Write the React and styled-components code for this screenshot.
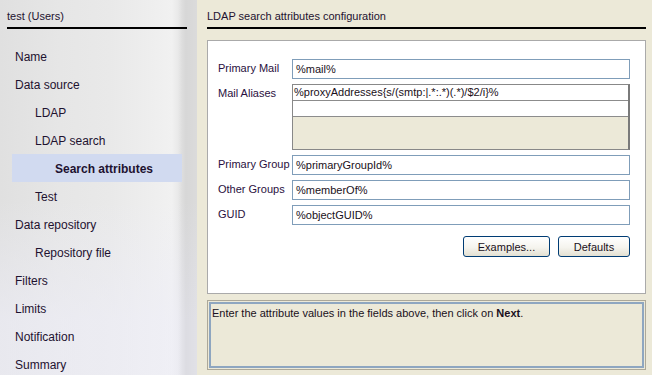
import styled, { createGlobalStyle } from "styled-components";

const GlobalStyle = createGlobalStyle`
  html, body {
    margin: 0;
    padding: 0;
    background: #ece9d8;
  }
`;

const Window = styled.div`
  display: flex;
  width: 652px;
  height: 375px;
  overflow: hidden;
  font-family: "Liberation Sans", Arial, sans-serif;
  color: #1e1230;
`;

const Sidebar = styled.div`
  width: 197px;
  flex-shrink: 0;
  box-sizing: border-box;
  padding: 0 10px 0 7px;
  background:
    linear-gradient(90deg, rgba(0,0,0,0) 0px, rgba(0,0,0,0) 178px, rgba(0,0,0,0.06) 186px, rgba(0,0,0,0.04) 197px),
    linear-gradient(180deg, rgba(255,255,255,0) 0px, rgba(255,255,255,0) 200px, rgba(238,238,248,0.6) 320px),
    linear-gradient(90deg, #e0e0e0 0px, #e6e6e6 60px, #e9e9e9 110px, #eeeeee 150px, #f1f1f1 172px, #e4e4e4 182px);
`;

const PaneHeader = styled.div`
  height: 29px;
  box-sizing: border-box;
  padding-top: 9px;
  font-size: 11px;
  line-height: 14px;
  border-bottom: 2px solid #000;
`;

const NavList = styled.ul`
  list-style: none;
  margin: 13px 0 0 5px;
  padding: 0;
  width: 170px;
`;

const NavItem = styled.li`
  height: 28px;
  line-height: 30px;
  padding-left: ${(p) => 3 + p.$level * 20}px;
  font-size: 12px;
  font-weight: ${(p) => (p.$active ? "bold" : "normal")};
  background: ${(p) => (p.$active ? "#d1daf0" : "transparent")};
  white-space: nowrap;
`;

const Main = styled.div`
  flex: 1;
  display: flex;
  flex-direction: column;
  padding: 0 6px 5px 10px;
  background: #ece9d8;
`;

const FormPanel = styled.div`
  margin-top: 11px;
  height: 254px;
  box-sizing: border-box;
  background: #fff;
  border: 1px solid #aaaaaa;
  padding: 18px 15px 0 10px;
  display: flex;
  flex-direction: column;
  gap: 5px;
`;

const Row = styled.div`
  display: flex;
  align-items: flex-start;
`;

const Label = styled.label`
  width: 74px;
  flex-shrink: 0;
  font-size: 11px;
  line-height: 14px;
  padding-top: 2px;
  color: #2a1040;
`;

const Field = styled.div`
  flex: 1;
  height: 20px;
  box-sizing: border-box;
  border: 1px solid #7f9db9;
  background: #fff;
  font-size: 11px;
  line-height: 19px;
  padding-left: 3px;
  color: #1a1020;
  white-space: nowrap;
  overflow: hidden;
`;

const ListBox = styled.div`
  flex: 1;
  height: 66px;
  box-sizing: border-box;
  border: 1px solid #888888;
  border-right: 2px solid #7a7a7a;
  background: #ece9d8;
  display: flex;
  flex-direction: column;
`;

const ListRow = styled.div`
  height: 16px;
  box-sizing: border-box;
  border-bottom: 1px solid #8c8c8c;
  background: #fff;
  font-size: 11px;
  line-height: 15px;
  padding-left: 1px;
  color: #1a1020;
  white-space: nowrap;
  overflow: hidden;
`;

const ButtonBar = styled.div`
  display: flex;
  justify-content: flex-end;
  gap: 8px;
  margin-top: 6px;
`;

const Button = styled.button`
  width: ${(p) => p.$w}px;
  height: 21px;
  padding: 0;
  border: 1px solid #003c74;
  border-radius: 3px;
  background: linear-gradient(180deg, #ffffff 0%, #f5f4ee 55%, #e3e0d2 100%);
  font-family: "Liberation Sans", Arial, sans-serif;
  font-size: 11px;
  color: #1a1020;
`;

const HintOuter = styled.div`
  margin-top: 6px;
  flex: 1;
  display: flex;
  border: 1px solid #aca899;
  padding: 1px;
`;

const HintInner = styled.div`
  flex: 1;
  border: 2px solid #8ea6c0;
  padding: 2px 0 0 1px;
  font-size: 11px;
  line-height: 14px;
  color: #1a1020;
`;

const nav = [
  { label: "Name", level: 0 },
  { label: "Data source", level: 0 },
  { label: "LDAP", level: 1 },
  { label: "LDAP search", level: 1 },
  { label: "Search attributes", level: 2, active: true },
  { label: "Test", level: 1 },
  { label: "Data repository", level: 0 },
  { label: "Repository file", level: 1 },
  { label: "Filters", level: 0 },
  { label: "Limits", level: 0 },
  { label: "Notification", level: 0 },
  { label: "Summary", level: 0 },
];

export default function App() {
  return (
    <>
      <GlobalStyle />
      <Window>
        <Sidebar>
          <PaneHeader>test (Users)</PaneHeader>
          <NavList>
            {nav.map((item) => (
              <NavItem key={item.label} $level={item.level} $active={item.active}>
                {item.label}
              </NavItem>
            ))}
          </NavList>
        </Sidebar>
        <Main>
          <PaneHeader>LDAP search attributes configuration</PaneHeader>
          <FormPanel>
            <Row>
              <Label>Primary Mail</Label>
              <Field>%mail%</Field>
            </Row>
            <Row>
              <Label>Mail Aliases</Label>
              <ListBox>
                <ListRow>{"%proxyAddresses{s/(smtp:|.*:.*)(.*)/$2/i}%"}</ListRow>
                <ListRow />
              </ListBox>
            </Row>
            <Row>
              <Label>Primary Group</Label>
              <Field>%primaryGroupId%</Field>
            </Row>
            <Row>
              <Label>Other Groups</Label>
              <Field>%memberOf%</Field>
            </Row>
            <Row>
              <Label>GUID</Label>
              <Field>%objectGUID%</Field>
            </Row>
            <ButtonBar>
              <Button $w={87}>Examples...</Button>
              <Button $w={72}>Defaults</Button>
            </ButtonBar>
          </FormPanel>
          <HintOuter>
            <HintInner>
              Enter the attribute values in the fields above, then click on <b>Next</b>.
            </HintInner>
          </HintOuter>
        </Main>
      </Window>
    </>
  );
}
